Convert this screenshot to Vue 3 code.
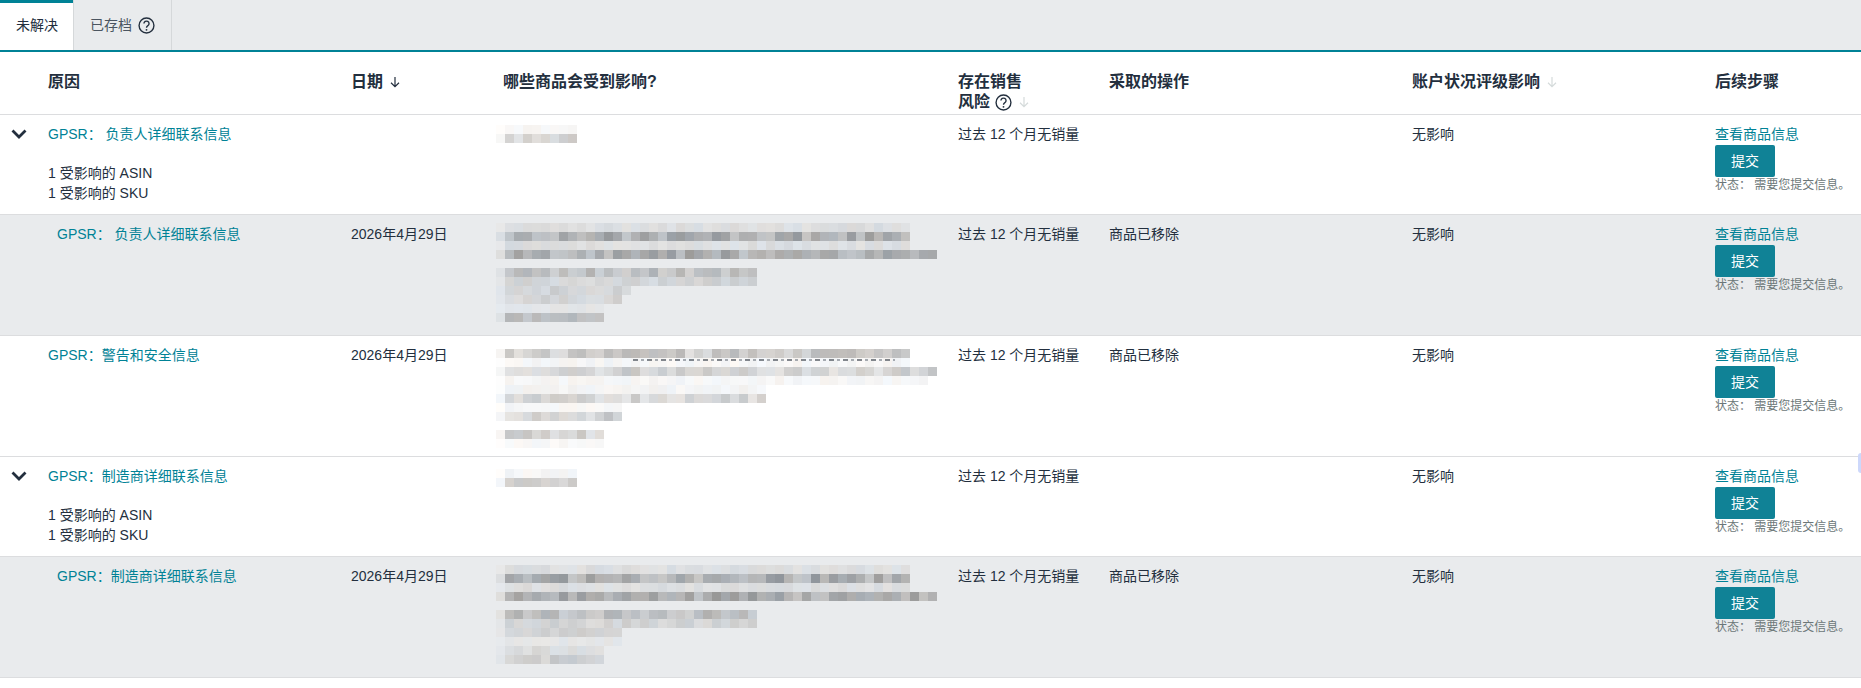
<script setup>
const seedRand = (seed) => {
  let s = seed
  return () => {
    s = (s * 1664525 + 1013904223) % 4294967296
    return s / 4294967296
  }
}

const L = 14
const D = 66
const M = 46
const S = 24
const F = 6

function build(spec, seed, gray) {
  const r = seedRand(seed)
  const bg = gray ? [233, 235, 237] : [255, 255, 255]
  return spec.map(([count, amp]) => {
    const cells = []
    for (let i = 0; i < count; i++) {
      const k = i === 0 ? 0.2 : 0.55 + r() * 0.75
      const v = amp * k
      const tint = r() * 8 - 4
      const c = amp === 0
        ? 'transparent'
        : `rgb(${Math.round(bg[0] - v - tint)},${Math.round(bg[1] - v)},${Math.round(bg[2] - v + tint)})`
      cells.push(c)
    }
    return cells
  })
}

const rows = [
  {
    kind: 'parent', reason: 'GPSR： 负责人详细联系信息', date: '', action: '', top: 10,
    mosaic: build([[9, F + 4], [9, S + 18]], 11, false), asin: true,
  },
  {
    kind: 'child gray', reason: 'GPSR： 负责人详细联系信息', date: '2026年4月29日', action: '商品已移除', top: 8,
    mosaic: build([[46, L], [46, D], [46, L], [49, D], [0, 0], [29, M], [29, S], [15, S + 4], [14, S], [12, F], [12, M]], 23, true),
  },
  {
    kind: 'plain', reason: 'GPSR：警告和安全信息', date: '2026年4月29日', action: '商品已移除', top: 13,
    mosaic: build([[46, S + 30], [46, F + 4], [49, S + 22], [48, F + 4], [30, F + 6], [30, S + 20], [14, F + 4], [14, S + 24], [0, 0], [12, S + 24], [12, F + 2]], 37, false),
    sliver: true,
  },
  {
    kind: 'parent', reason: 'GPSR：制造商详细联系信息', date: '', action: '', top: 12,
    mosaic: build([[9, F + 4], [9, S + 20]], 41, false), asin: true,
  },
  {
    kind: 'child gray', reason: 'GPSR：制造商详细联系信息', date: '2026年4月29日', action: '商品已移除', top: 8,
    mosaic: build([[46, L], [46, D], [46, L], [49, D], [0, 0], [29, M], [29, S], [14, S], [14, F], [12, S - 6], [12, S + 6]], 59, true),
  },
]
</script>

<template>
  <div class="page">
    <div class="tabs">
      <div class="tab active">未解决</div>
      <div class="tab">
        已存档
        <svg class="help" viewBox="0 0 16 16" width="17" height="17">
          <circle cx="8" cy="8" r="7" fill="none" stroke="#232f3e" stroke-width="1.3" />
          <path d="M5.6 6.2a2.4 2.3 0 1 1 3.7 1.9c-.8.5-1.3 1-1.3 1.9" fill="none" stroke="#232f3e" stroke-width="1.3" />
          <circle cx="8" cy="12.1" r=".9" fill="#232f3e" />
        </svg>
      </div>
    </div>

    <div class="grid head">
      <div></div>
      <div>原因</div>
      <div class="with-icon">
        日期
        <svg class="arrow" viewBox="0 0 12 12" width="12" height="12">
          <path d="M6 1v9.5M2 6.8l4 3.8 4-3.8" fill="none" stroke="#232f3e" stroke-width="1.2" />
        </svg>
      </div>
      <div>哪些商品会受到影响?</div>
      <div>
        存在销售<br />
        <span class="with-icon">
          风险
          <svg class="help" viewBox="0 0 16 16" width="17" height="17">
            <circle cx="8" cy="8" r="7" fill="none" stroke="#232f3e" stroke-width="1.3" />
            <path d="M5.6 6.2a2.4 2.3 0 1 1 3.7 1.9c-.8.5-1.3 1-1.3 1.9" fill="none" stroke="#232f3e" stroke-width="1.3" />
            <circle cx="8" cy="12.1" r=".9" fill="#232f3e" />
          </svg>
          <svg class="arrow" viewBox="0 0 12 12" width="12" height="12">
            <path d="M6 1v9.5M2 6.8l4 3.8 4-3.8" fill="none" stroke="#d5dbdb" stroke-width="1.2" />
          </svg>
        </span>
      </div>
      <div>采取的操作</div>
      <div class="with-icon">
        账户状况评级影响
        <svg class="arrow" viewBox="0 0 12 12" width="12" height="12">
          <path d="M6 1v9.5M2 6.8l4 3.8 4-3.8" fill="none" stroke="#d5dbdb" stroke-width="1.2" />
        </svg>
      </div>
      <div>后续步骤</div>
    </div>

    <div v-for="(row, ri) in rows" :key="ri" class="grid row" :class="row.kind">
      <div class="toggle">
        <svg v-if="row.kind === 'parent'" viewBox="0 0 16 10" width="16" height="10">
          <path d="M1.5 1.5 8 8l6.5-6.5" fill="none" stroke="#232f3e" stroke-width="2.8" />
        </svg>
      </div>
      <div class="reason">
        <a class="link">{{ row.reason }}</a>
        <div v-if="row.asin" class="asin">
          <div>1 受影响的 ASIN</div>
          <div>1 受影响的 SKU</div>
        </div>
      </div>
      <div>{{ row.date }}</div>
      <div class="products">
        <div class="mosaic" :style="{ marginTop: row.top - 9 + 'px' }">
          <div v-for="(line, li) in row.mosaic" :key="li" class="mline">
            <span v-for="(c, ci) in line" :key="ci" class="cell" :style="{ background: c }"></span>
          </div>
          <div v-if="row.sliver" class="sliver"></div>
        </div>
      </div>
      <div>过去 12 个月无销量</div>
      <div>{{ row.action }}</div>
      <div>无影响</div>
      <div class="next">
        <a class="link">查看商品信息</a>
        <button class="submit" type="button">提交</button>
        <div class="status">状态： 需要您提交信息。</div>
      </div>
    </div>
    <div class="edge"></div>
  </div>
</template>

<style>
html, body { margin: 0; background: #fff; }
</style>

<style scoped>
.page {
  position: relative;
  width: 1861px;
  height: 688px;
  overflow: hidden;
  font-family: "Liberation Sans", "Noto Sans CJK SC", sans-serif;
  font-size: 14px;
  line-height: 20px;
  color: #232f3e;
  background: #fff;
}
.tabs {
  display: flex;
  height: 50px;
  background: #e9ebed;
  border-bottom: 2px solid #008296;
}
.tab {
  display: flex;
  align-items: center;
  gap: 6px;
  padding: 0 16px;
  color: #4b5560;
  border-right: 1px solid #d5d8da;
}
.tab.active {
  padding-right: 15px;
  background: #fff;
  color: #232f3e;
  box-shadow: inset 0 3px 0 #008296;
}
.help { flex: none; }
.grid {
  display: grid;
  grid-template-columns: 48px 303px 152px 455px 151px 303px 303px 146px;
  border-bottom: 1px solid #dcdddf;
}
.head {
  height: 63px;
  box-sizing: border-box;
  padding-top: 20px;
  font-size: 16px;
  font-weight: 700;
  color: #232f3e;
}
.with-icon {
  display: inline-flex;
  align-items: center;
  align-self: start;
  gap: 5px;
}
.with-icon .arrow { margin-left: 1px; }
.row {
  padding-top: 9px;
  box-sizing: border-box;
  height: 121px;
}
.row.parent { height: 100px; }
.row.gray { background: #e9ebed; }
.row.child .reason { padding-left: 9px; }
.toggle {
  padding: 5px 0 0 11px;
  line-height: 0;
}
.link { color: #008296; cursor: pointer; }
.asin { margin-top: 19px; }
.products { min-width: 0; }
.mosaic { position: relative; margin-left: -7px; }
.mline { display: flex; height: 9px; }
.cell { display: block; width: 9px; height: 9px; }
.sliver {
  position: absolute;
  left: 137px;
  top: 10px;
  width: 262px;
  height: 2px;
  background: repeating-linear-gradient(90deg, #5a6068 0 5px, transparent 5px 8px, #8a9098 8px 11px, transparent 11px 14px);
  opacity: 0.75;
}
.next { display: flex; flex-direction: column; align-items: flex-start; }
.submit {
  width: 60px;
  height: 32px;
  margin-top: 1px;
  padding: 0;
  border: none;
  border-radius: 2px;
  background: #108296;
  color: #fff;
  font: inherit;
}
.status {
  font-size: 12px;
  line-height: 16px;
  color: #6c7778;
  white-space: nowrap;
}
.edge {
  position: absolute;
  right: 0;
  top: 453px;
  width: 3px;
  height: 20px;
  border-radius: 3px 0 0 3px;
  background: #cdd8fb;
}
</style>
